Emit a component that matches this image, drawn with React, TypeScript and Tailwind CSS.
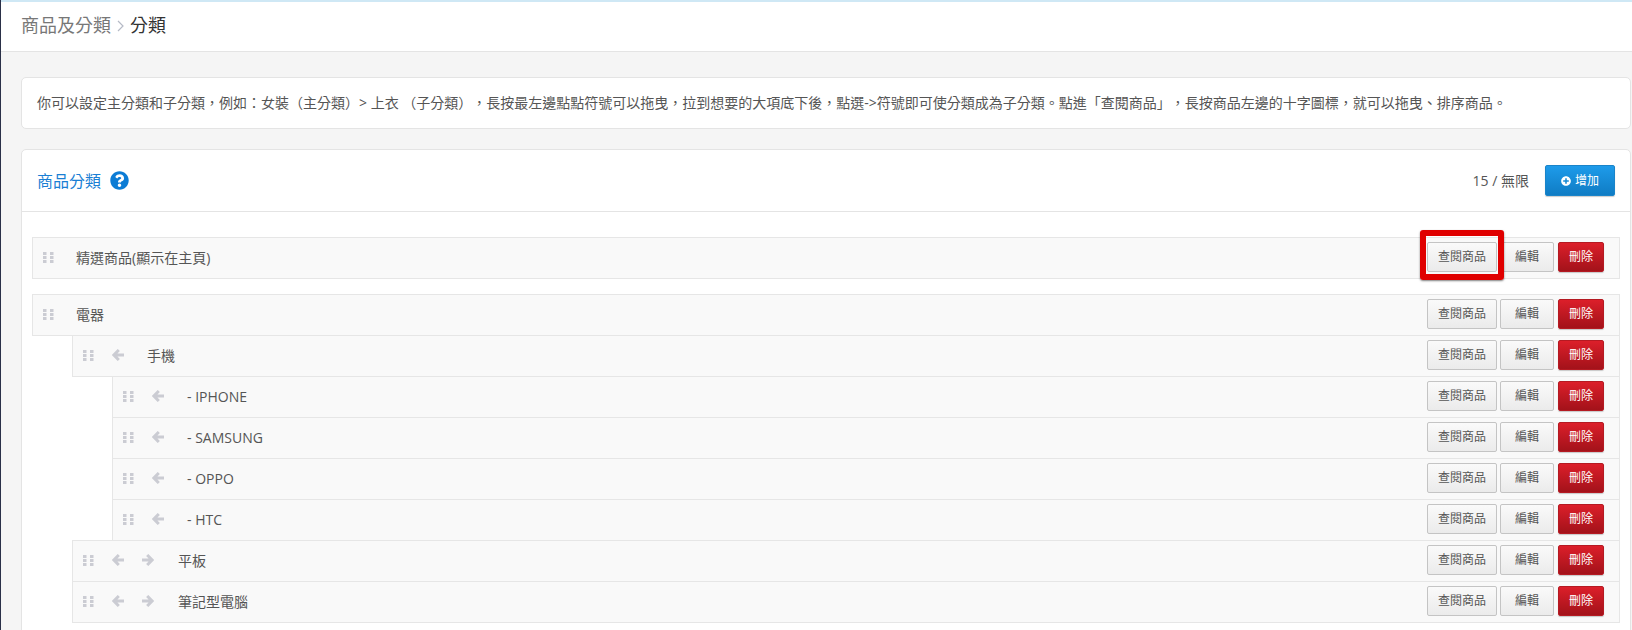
import React from 'react';
import { FaPlusCircle, FaQuestionCircle } from 'react-icons/fa';

// ---- data ----

interface CategoryRow {
  name: string;
  level: 0 | 1 | 2;
  left?: boolean;
  right?: boolean;
}

const ELECTRONICS: CategoryRow[] = [
  { name: '電器', level: 0 },
  { name: '手機', level: 1, left: true },
  { name: '- IPHONE', level: 2, left: true },
  { name: '- SAMSUNG', level: 2, left: true },
  { name: '- OPPO', level: 2, left: true },
  { name: '- HTC', level: 2, left: true },
  { name: '平板', level: 1, left: true, right: true },
  { name: '筆記型電腦', level: 1, left: true, right: true },
];

const INDENT = ['ml-0', 'ml-[40px]', 'ml-[80px]'];

// ---- bits ----

function Grip() {
  return (
    <svg width="11" height="11" viewBox="0 0 11 11" className="shrink-0 text-[#cbccd3]" fill="currentColor">
      <rect x="0" y="0" width="3.5" height="3" />
      <rect x="7" y="0" width="3.5" height="3" />
      <rect x="0" y="4" width="3.5" height="3" />
      <rect x="7" y="4" width="3.5" height="3" />
      <rect x="0" y="8" width="3.5" height="3" />
      <rect x="7" y="8" width="3.5" height="3" />
    </svg>
  );
}

function Arrow({ flip, className }: { flip?: boolean; className: string }) {
  return (
    <svg
      width="12"
      height="12"
      viewBox="0 0 12 12"
      className={`${className} shrink-0 text-[#cbccd3] ${flip ? 'rotate-180' : ''}`}
      fill="none"
      stroke="currentColor"
      strokeWidth="3"
    >
      <path d="M6.8 1 L1.9 6 L6.8 11 M2.2 6 H12" />
    </svg>
  );
}

function RowButtons() {
  return (
    <div className="flex items-center text-[12px] leading-none">
      <button className="h-[30px] w-[70px] rounded-[2px] border border-[#c4c4c4] bg-gradient-to-b from-[#fafafa] to-[#ebebeb] text-[#555]">
        查閱商品
      </button>
      <button className="ml-[3px] h-[30px] w-[54px] rounded-[2px] border border-[#c4c4c4] bg-gradient-to-b from-[#fafafa] to-[#ebebeb] text-[#555]">
        編輯
      </button>
      <button className="ml-[4px] h-[30px] w-[46px] rounded-[2px] border border-[#b51a22] bg-gradient-to-b from-[#dc1f2a] to-[#a3121a] text-white shadow-[0_1px_1px_rgba(0,0,0,0.2)]">
        刪除
      </button>
    </div>
  );
}

function Row({ row }: { row: CategoryRow }) {
  const textGap = row.right ? 'ml-[24px]' : row.left ? 'ml-[23px]' : 'ml-[22px]';
  return (
    <div
      className={`${INDENT[row.level]} -mt-px flex h-[42px] items-center border border-[#e6e6e6] bg-[#f9f9f9] pb-[2px] pl-[10px] pr-[15px] first:mt-0`}
    >
      <Grip />
      {row.left && <Arrow className="ml-[18px]" />}
      {row.right && <Arrow flip className="ml-[18px]" />}
      <span className={`${textGap} text-[14px] text-[#555]`}>{row.name}</span>
      <div className="ml-auto">
        <RowButtons />
      </div>
    </div>
  );
}

export default function App() {
  return (
    <div
      className="h-[630px] w-[1632px] overflow-hidden border-l border-l-[#2a3048] bg-[#f5f5f5] [text-spacing-trim:space-all]"
      style={{ fontFamily: '"Open Sans", "Noto Sans CJK TC", sans-serif' }}
    >
      <div className="-ml-px h-[2px] bg-[#cfe8f5]" />

      {/* Breadcrumb */}
      <div className="flex h-[50px] items-center border-b border-[#e4e4e4] bg-white pb-[2px] pl-[20px] text-[18px]">
        <span className="text-[#777]">商品及分類</span>
        <svg width="7" height="12" viewBox="0 0 7 12" className="mx-[6px]" fill="none" stroke="#b5bac6" strokeWidth="1.2">
          <path d="M1 1 L6 6 L1 11" />
        </svg>
        <span className="text-[#333]">分類</span>
      </div>

      <div className="pl-[20px] pr-[1px] pt-[25px]">
        {/* Notice */}
        <div className="flex h-[52px] items-center rounded-[5px] border border-[#e4e4e4] bg-white pb-[1px] pl-[15px] text-[14px] text-[#555]">
          你可以設定主分類和子分類，例如：女裝（主分類）&gt; 上衣 （子分類），長按最左邊點點符號可以拖曳，拉到想要的大項底下後，點選-&gt;符號即可使分類成為子分類。點進「查閱商品」，長按商品左邊的十字圖標，就可以拖曳、排序商品。
        </div>

        {/* Categories */}
        <div className="relative mt-[20px] h-[600px] rounded-[5px] border border-[#e4e4e4] bg-white">
          <div className="flex h-[62px] items-center border-b border-[#e4e4e4] pl-[15px] pr-[15px]">
            <span className="text-[16px] text-[#1a7fd4]">商品分類</span>
            <FaQuestionCircle className="ml-[9px] size-[19px] text-[#0c7cd5]" />
            <span className="ml-auto text-[14px] text-[#555]">15 / 無限</span>
            <button className="ml-[16px] flex h-[31px] w-[70px] items-center justify-center gap-[4px] rounded-[2px] border border-[#1a84c9] bg-gradient-to-b from-[#1e9bea] to-[#0f7cc4] text-[12px] text-white shadow-[0_1px_1px_rgba(0,0,0,0.2)]">
              <FaPlusCircle className="size-[10px]" />
              增加
            </button>
          </div>

          <div className="px-[10px] pt-[25px]">
            <Row row={{ name: '精選商品(顯示在主頁)', level: 0 }} />
            <div className="mt-[15px]">
              {ELECTRONICS.map((row) => (
                <Row key={row.name} row={row} />
              ))}
            </div>
          </div>

          {/* Red highlight around the first button */}
          <div className="absolute left-[1398px] top-[80px] h-[50px] w-[84px] rounded-[3px] border-[6px] border-[#e00000] shadow-[0_1px_2px_rgba(0,0,0,0.5)]" />
        </div>
      </div>
    </div>
  );
}
